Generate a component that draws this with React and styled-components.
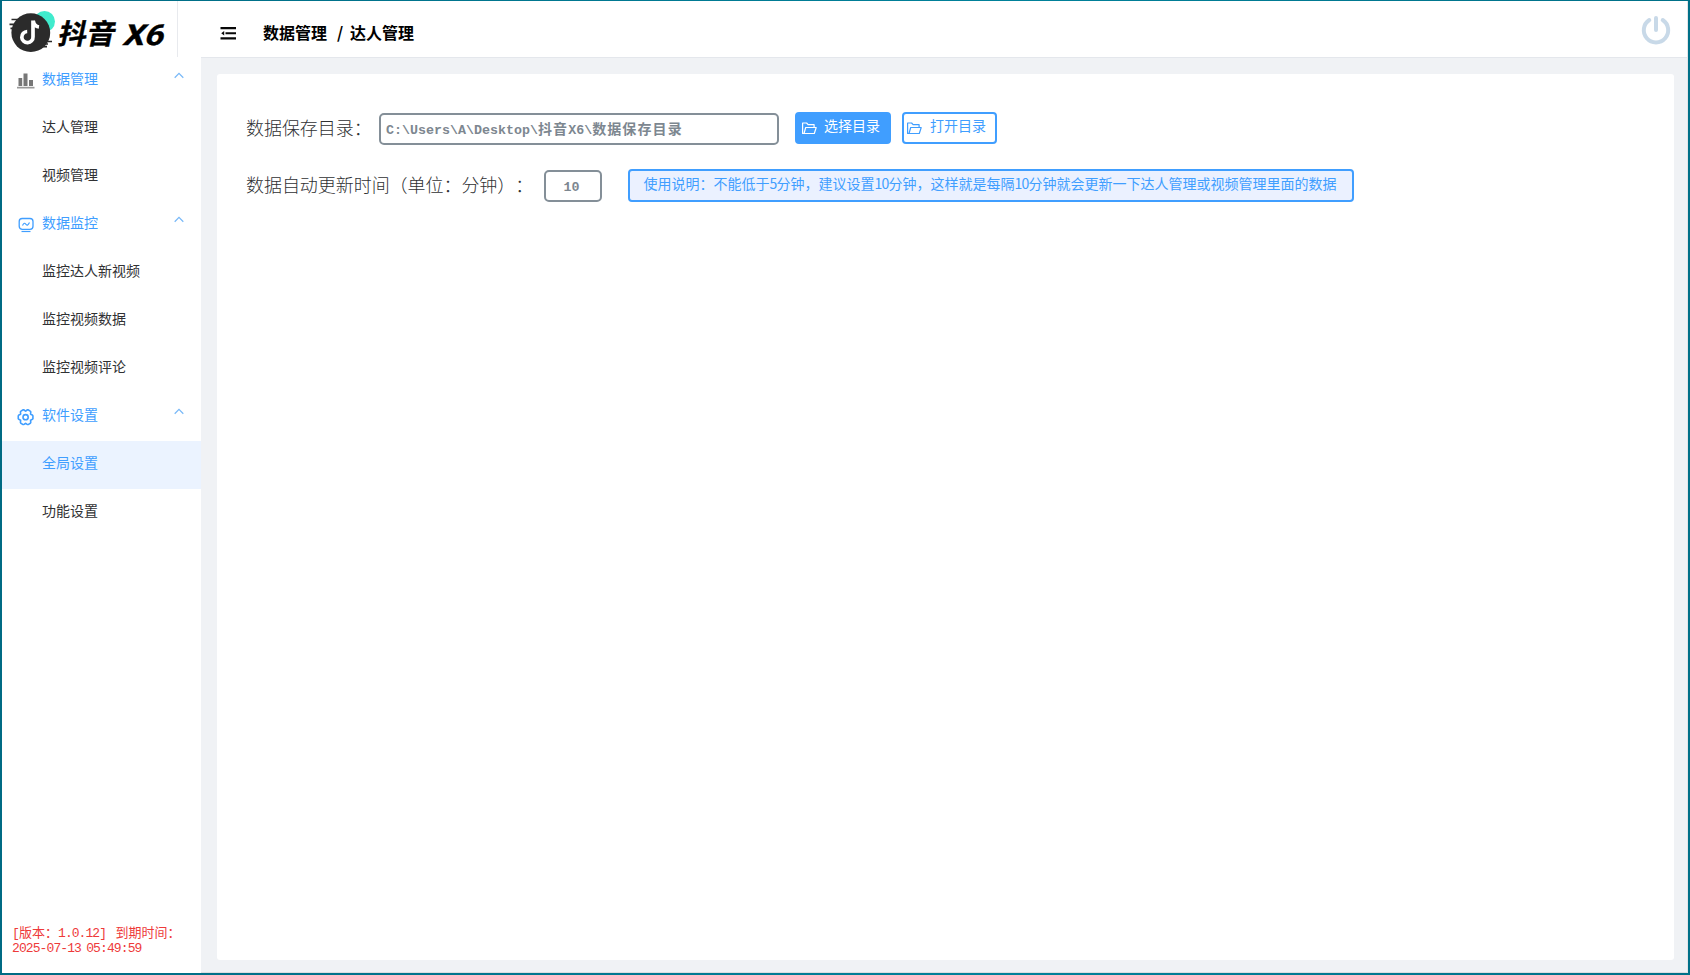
import React from "react";
import styled, { createGlobalStyle } from "styled-components";

const sans = `"Noto Sans CJK SC", sans-serif`;

const Global = createGlobalStyle`
  * { box-sizing: border-box; }
  body {
    margin: 0;
    font-family: ${sans};
    color: #303133;
    font-kerning: none;
    font-feature-settings: "chws" 0, "halt" 0, "palt" 0;
    text-spacing-trim: space-all;
  }
`;

const Desktop = styled.div`
  width: 1690px;
  height: 975px;
  padding: 1px 2px 2px;
  background: linear-gradient(90deg, #006b84, #00819a 60%, #007088);
`;

const Window = styled.div`
  display: grid;
  grid-template-columns: 199px 1fr;
  width: 100%;
  height: 972px;
  background: #fff;
`;

const Sidebar = styled.aside`
  display: flex;
  flex-direction: column;
  background: #fff;
`;

const Logo = styled.div`
  display: flex;
  width: 176px;
  height: 56px;
  border-right: 1px solid #e8eaee;
`;

const MenuRow = styled.div`
  display: flex;
  height: 48px;
  padding: 0 17px 0 14px;
  background: ${(p) => (p.$active ? "#ebf3ff" : "transparent")};
  color: ${(p) => (p.$blue ? "#409eff" : "#303133")};
  font-size: 14px;
  line-height: 42px;
`;

const IconSlot = styled.span`
  display: flex;
  width: 26px;
  padding-top: 14px;
`;

const MenuLabel = styled.span`
  flex: 1;
  white-space: nowrap;
`;

const ChevronSlot = styled.span`
  display: flex;
  padding-top: 14px;
`;

const License = styled.div`
  margin-top: auto;
  padding: 0 0 17px 10px;
  color: #ee3a3a;
  font: 13px/15px "Liberation Mono", ${sans};
  white-space: pre;
`;

const Narrow = styled.span`
  letter-spacing: ${(p) => p.$track}px;
`;

const Main = styled.main`
  display: flex;
  flex-direction: column;
  background: #f0f2f5;
  border-right: 1px solid #e3e5e8;
  border-bottom: 1px solid #dcdde0;
`;

const Header = styled.header`
  display: flex;
  align-items: flex-start;
  height: 57px;
  padding: 0 15px 0 18px;
  background: #fff;
  border-bottom: 1px solid #e4e7ec;
`;

const FoldButton = styled.span`
  display: flex;
  width: 44px;
  padding: 25px 0 0 1px;
`;

const Crumbs = styled.div`
  flex: 1;
  display: flex;
  color: #000;
  font-size: 16px;
  font-weight: 700;
  line-height: 62px;
  height: 56px;
`;

const Slash = styled.span`
  width: 23px;
  padding-left: 10px;
`;

const PowerSlot = styled.span`
  display: flex;
  padding-top: 12px;
`;

const Card = styled.section`
  flex: 1;
  margin: 16px 13px 12px 16px;
  padding: 38px 29px;
  background: #fff;
  border-radius: 3px;
`;

const FormRow = styled.div`
  display: flex;
  height: 34px;
  margin-bottom: 23px;
`;

const Label = styled.label`
  width: ${(p) => p.$width}px;
  font-size: 18px;
  font-weight: 300;
  line-height: 31px;
  letter-spacing: -0.05px;
  white-space: nowrap;
`;

const Field = styled.div`
  width: ${(p) => p.$width}px;
  height: 32px;
  margin-top: 1px;
  padding: ${(p) => (p.$center ? "0 3px 0 0" : "0 0 0 5px")};
  border: 2px solid #848f98;
  border-radius: 5px;
  color: #7d8790;
  font-size: 14px;
  font-weight: 700;
  line-height: 27px;
  letter-spacing: 1.1px;
  white-space: nowrap;
  text-align: ${(p) => (p.$center ? "center" : "left")};
`;

const PathText = styled.span`
  font-family: "Liberation Mono", monospace;
  font-size: 13.33px;
  letter-spacing: 0;
`;

const Button = styled.span`
  display: flex;
  width: ${(p) => (p.$primary ? 96 : 95)}px;
  height: 32px;
  margin-left: ${(p) => (p.$primary ? 16 : 11)}px;
  padding-left: ${(p) => (p.$primary ? 4 : 2)}px;
  border: 2px solid #409eff;
  border-radius: 4px;
  background: ${(p) => (p.$primary ? "#409eff" : "#fff")};
  color: ${(p) => (p.$primary ? "#fff" : "#409eff")};
  font-size: 14px;
  line-height: 23px;
  white-space: nowrap;
`;

const FolderSlot = styled.span`
  display: flex;
  width: ${(p) => p.$width}px;
  padding-top: 7px;
`;

const Notice = styled.div`
  width: 726px;
  height: 33px;
  margin-left: 26px;
  padding-left: 13.5px;
  border: 2px solid #409eff;
  border-radius: 4px;
  background: #ebf1ff;
  color: #409eff;
  font-size: 14px;
  line-height: 25px;
  white-space: nowrap;
`;

function BrandMark() {
  return (
    <svg width="175" height="56" viewBox="2 1 175 56">
      <circle cx="44.500" cy="21.500" r="10.500" fill="#40ebcd" />
      <circle cx="30.800" cy="32.700" r="19.400" fill="#2b2b2b" />
      <path
        d="M11.500 19.500H19M9.500 24.300H17M10.500 28.300h3M44 41.500h8M45 44h3M41 46.700h6"
        stroke="#2b2b2b"
        strokeWidth="1.700"
      />
      <path
        d="M33 20.500v16.300a5.600 5.600 0 1 1-5.800-5.300M33.300 21c.5 4 2.300 5.500 5.700 6"
        fill="none"
        stroke="#fff"
        strokeWidth="3.700"
      />
      <g fill="#000" stroke="#000" strokeWidth=".4" fontFamily={sans} fontWeight="700" fontSize="28">
        <text transform="translate(57 43.500) skewX(-12)" textLength="57" lengthAdjust="spacingAndGlyphs">抖音</text>
        <text transform="translate(122 44.500) skewX(-17) scale(1.150 1)" fontFamily="Roboto, sans-serif" fontSize="29">X6</text>
      </g>
    </svg>
  );
}

function BarsIcon() {
  return (
    <svg width="19" height="19" viewBox="0 0 19 19" fill="#777">
      <path d="M2.500 7h3.700v8H2.500zM7.500 2.500h4V15h-4zM13 9h4v6h-4z" />
      <path d="M1 15.800h17.500v1.700H1z" fill="#999" />
    </svg>
  );
}

function MonitorIcon() {
  return (
    <svg width="19" height="19" viewBox="0 0 19 19" fill="none" stroke="#409eff">
      <rect x="3.200" y="3.500" width="13.800" height="10.800" rx="3" strokeWidth="1.300" />
      <path d="M6.500 10.500c1.500-3 2.200-2.600 3.500-1.200s2 .8 3.500-1.800" strokeWidth="1.200" />
      <path d="M5.500 16.500h9" strokeWidth="1.200" />
    </svg>
  );
}

// Six-lobed cog outline: the radius swells once every 60 degrees.
const cogOutline =
  Array.from({ length: 72 }, (_, i) => {
    const a = (i * Math.PI) / 36;
    const r = 6.9 + 0.75 * Math.cos(6 * a) - 0.35 * Math.cos(12 * a);
    return `${i ? "L" : "M"}${(9.6 + r * Math.cos(a)).toFixed(2)} ${(10.2 + r * 1.05 * Math.sin(a)).toFixed(2)}`;
  }).join("") + "Z";

function GearIcon() {
  return (
    <svg width="19" height="20" viewBox="0 0 19 20" fill="none" stroke="#409eff" strokeWidth="1.600">
      <path d={cogOutline} />
      <circle cx="9.600" cy="10.200" r="2.600" />
    </svg>
  );
}

function Chevron() {
  return (
    <svg width="10" height="10" viewBox="0 0 10 10" fill="none" stroke="#79b9f8" strokeWidth="1.300">
      <path d="M.7 6.700 5 2.400l4.300 4.300" />
    </svg>
  );
}

function FolderIcon({ color }) {
  return (
    <svg width="17" height="16" viewBox="0 0 17 16" fill="none" stroke={color} strokeWidth="1.200" strokeLinejoin="round">
      <path d="M3 12.500H1.600V2h4l1.500 1.700h6v2.500M3 12.500l1.700-6h10.500l-1.900 6z" />
    </svg>
  );
}

function FoldIcon() {
  return (
    <svg width="17" height="15" viewBox="0 0 17 15">
      <path d="M.5 1H16v2.200H.5zM5.500 6.200H16v2.100H5.500zM.5 11.200H16v2.200H.5zM1.200 7.200l3-2.200v4.400z" fill="#080808" />
    </svg>
  );
}

function PowerIcon() {
  return (
    <svg width="32" height="32" viewBox="0 0 32 32" fill="none" stroke="#c8d9e8" strokeWidth="4" strokeLinecap="round">
      <path d="M9.300 7a12.200 12.200 0 1 0 13.400 0M16 5v12" />
    </svg>
  );
}

const menu = [
  { title: "数据管理", icon: <BarsIcon />, items: ["达人管理", "视频管理"] },
  { title: "数据监控", icon: <MonitorIcon />, items: ["监控达人新视频", "监控视频数据", "监控视频评论"] },
  { title: "软件设置", icon: <GearIcon />, items: ["全局设置", "功能设置"] },
];

function Menu({ active }) {
  return menu.map((group) => (
    <React.Fragment key={group.title}>
      <MenuRow $blue>
        <IconSlot>{group.icon}</IconSlot>
        <MenuLabel>{group.title}</MenuLabel>
        <ChevronSlot><Chevron /></ChevronSlot>
      </MenuRow>
      {group.items.map((item) => (
        <MenuRow key={item} $active={item === active} $blue={item === active}>
          <IconSlot />
          <MenuLabel>{item}</MenuLabel>
        </MenuRow>
      ))}
    </React.Fragment>
  ));
}

export default function App() {
  return (
    <Desktop>
      <Global />
      <Window>
        <Sidebar>
          <Logo><BrandMark /></Logo>
          <Menu active="全局设置" />
          <License>
            <Narrow $track={-0.8}>[</Narrow>版本：<Narrow $track={-0.95}>1.0.12]</Narrow>
            <Narrow $track={-3}>{"  "}</Narrow>到期时间：
            {"\n"}
            <Narrow $track={-0.9}>2025-07-13</Narrow>
            <Narrow $track={-2.6}> </Narrow>
            <Narrow $track={-0.9}>05:49:59</Narrow>
          </License>
        </Sidebar>
        <Main>
          <Header>
            <FoldButton><FoldIcon /></FoldButton>
            <Crumbs>
              <span>数据管理</span>
              <Slash>/</Slash>
              <span>达人管理</span>
            </Crumbs>
            <PowerSlot><PowerIcon /></PowerSlot>
          </Header>
          <Card>
            <FormRow>
              <Label $width={133}>数据保存目录：</Label>
              <Field $width={400}>
                <PathText>C:\Users\A\Desktop\</PathText>抖音<PathText>X6\</PathText>数据保存目录
              </Field>
              <Button $primary>
                <FolderSlot $width={23}><FolderIcon color="#fff" /></FolderSlot>
                选择目录
              </Button>
              <Button>
                <FolderSlot $width={24}><FolderIcon color="#409eff" /></FolderSlot>
                打开目录
              </Button>
            </FormRow>
            <FormRow>
              <Label $width={298}>数据自动更新时间（单位：分钟）：</Label>
              <Field $width={58} $center><PathText>10</PathText></Field>
              <Notice>
                使用说明：不能低于<Narrow $track={-0.8}>5</Narrow>分钟，建议设置<Narrow $track={-0.8}>10</Narrow>
                分钟，这样就是每隔<Narrow $track={-0.8}>10</Narrow>分钟就会更新一下达人管理或视频管理里面的数据
              </Notice>
            </FormRow>
          </Card>
        </Main>
      </Window>
    </Desktop>
  );
}
